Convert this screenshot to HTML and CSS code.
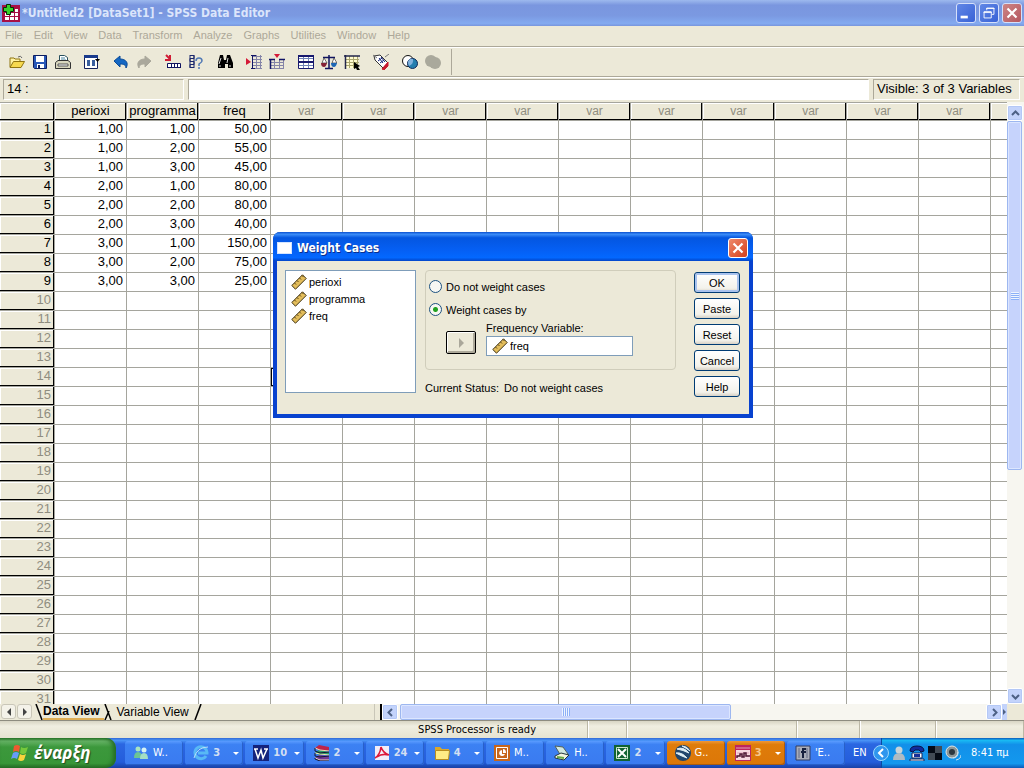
FILE: index.html
```html
<!DOCTYPE html>
<html lang="en">
<head>
<meta charset="utf-8">
<title>SPSS Data Editor</title>
<link rel="stylesheet" href="styles.css">
<script src="grid.js" defer></script>
</head>
<body>
<svg class="defs" aria-hidden="true">
  <symbol id="ruler" viewBox="0 0 16 16"><path d="M.8 11.500 11.500.8l3.700 3.700L4.500 15.200z" fill="#e3bd5b" stroke="#3d3012"/><path d="m3.500 9 1.500 1.500M6 6.500 7.500 8m1-4L10 5.500m1-4L12.500 3" stroke="#5a4414"/></symbol>
</svg>
<header class="titlebar">
  <svg class="app-icon" viewBox="0 0 18 18"><path fill="#a80f45" d="M0 1h18v17H0z"/><path fill="#fff" d="M3 5h13v11H3z"/><path stroke="#a80f45" d="M3 8.500h13M3 12.500h13M7.500 5v11M12.500 5v11"/><path fill="#35d12a" stroke="#052d05" d="M4.500.5h4v3h3v4h-3v3h-4v-3h-3v-4h3z"/></svg>
  <h1>*Untitled2 [DataSet1] - SPSS Data Editor</h1>
  <div class="window-buttons">
    <button aria-label="Minimize"><svg viewBox="0 0 20 20"><path fill="#fff" d="M4 13h8v3H4z"/></svg></button>
    <button aria-label="Restore"><svg viewBox="0 0 20 20" fill="none" stroke="#fff"><path d="M7.500 7V4.500h8v7H13M7 5h9"/><path d="M4.500 8.500h8v7h-8zM4 9.500h9"/></svg></button>
    <button class="close" aria-label="Close"><svg viewBox="0 0 20 20"><path stroke="#fff" stroke-width="2.400" d="m5 5 10 10M15 5 5 15"/></svg></button>
  </div>
</header>
<nav class="menubar">
  <button>File</button><button>Edit</button><button>View</button><button>Data</button><button>Transform</button><button>Analyze</button><button>Graphs</button><button>Utilities</button><button>Window</button><button>Help</button>
</nav>
<div class="toolbar">
  <div class="tools">
    <button aria-label="Open"><svg viewBox="0 0 16 16"><path d="M1 13V4h4l1 1h5v3" fill="#fff3a5" stroke="#8f7410"/><path d="M1 13.500 4.500 7.500h11L12 13.500z" fill="#f6d94f" stroke="#8f7410"/><path d="M9 3q3-2 4 1" fill="none" stroke="#666"/></svg></button>
    <button aria-label="Save"><svg viewBox="0 0 16 16"><path d="M1.500 1.500h13v13h-12l-1-1z" fill="#2858b8" stroke="#0b1c60"/><path fill="#fff" d="M4 2h8v6H4zM5 10h7v4H5z"/><path fill="#0b1c60" d="M6 11h2v3H6z"/></svg></button>
    <button aria-label="Print"><svg viewBox="0 0 16 16"><path d="M4.500 7V1.500h5l3 2V7" fill="#fff" stroke="#28505e"/><path d="M6 4h4M6 6h5" stroke="#4685a0"/><path d="M.5 8.500 3 6.500h10l2.500 2v6H.5z" fill="#d8d6be" stroke="#333"/><path d="M3 10h10v2H3z" fill="#fff" stroke="#555"/></svg></button>
  </div>
  <div class="tools">
    <button aria-label="Recall dialog"><svg viewBox="0 0 16 16"><path d="M.5 1.500h13v13H.5z" fill="#fff" stroke="#14215c"/><path d="M0 1h14v3H0z" fill="#193a8c"/><path d="M3 6h3v6H3zM8 6h3v6H8z" fill="#3a5f9e"/><path d="M11 5h5l-2.500 3z" fill="#000"/></svg></button>
  </div>
  <div class="tools">
    <button aria-label="Undo"><svg viewBox="0 0 16 16"><path d="m1 7 6-5v3c6 0 9 4 6 9 0-3-2-4-6-4v3z" fill="#1467c3" stroke="#084a98"/></svg></button>
    <button aria-label="Redo" disabled><svg viewBox="0 0 16 16"><path d="M15 7 9 2v3C3 5 0 9 3 14c0-3 2-4 6-4v3z" fill="#aaa89c" stroke="#aaa89c"/></svg></button>
  </div>
  <div class="tools">
    <button aria-label="Go to case"><svg viewBox="0 0 16 16"><path d="m1 1 4 4m0-4v5H0" stroke="#d01d35" stroke-width="2" fill="none"/><path d="M2.500 9.500h13v4h-13z" fill="#fff" stroke="#10145f"/><path d="M6.500 9v4M9.500 9v4M12.500 9v4M2 13.500h14" stroke="#10145f"/></svg></button>
    <button aria-label="Variables"><svg viewBox="0 0 16 16"><path d="M2 1.500h4v3H2v3h4v3H2v3h4M2 1v13M6 1v13" fill="none" stroke="#1c286d"/><path d="M8 7q0-3 3-3 3 0 3 3 0 1-3 3v2m0 1v2" fill="none" stroke="#527ab5" stroke-width="1.500"/></svg></button>
  </div>
  <div class="tools">
    <button aria-label="Find"><svg viewBox="0 0 16 16"><path d="M3 1h3l1 5h2l1-5h3l3 8v5h-5v-4H8v4H1V9z"/><path d="m4 4-2 6m9-6-1 5M3 11v2m10-2v2" stroke="#ddd"/></svg></button>
  </div>
  <div class="tools">
    <button aria-label="Insert case"><svg viewBox="0 0 16 16"><path d="m0 4 5 4-5 3z" fill="#d41937"/><path d="M6 2.500h10M7 5.500h9M6 8.500h10M7 11.500h9M6 14.500h10M10.500 1v14M14.500 1v14" stroke="#8585a8"/><path d="M6.500 1v14M5 1.500h5M5 14.500h4" stroke="#111565"/></svg></button>
    <button aria-label="Insert variable"><svg viewBox="0 0 16 16"><path d="M5 0h6L8 4z" fill="#d41937"/><path d="M1 8.500h14M1 11.500h14M1 14.500h14M5.500 5v10M10.500 5v10M14.500 5v10" stroke="#8585a8"/><path d="M0 5.500h6m4 0h6M1.500 5v10" stroke="#111565" stroke-width="1.500"/></svg></button>
  </div>
  <div class="tools">
    <button aria-label="Split file"><svg viewBox="0 0 16 16"><path d="M.5 1.500h15v13H.5z" fill="#fff" stroke="#17196e"/><path d="M1 4.500h14M1 11.500h14M5.500 1v13M10.500 1v13" stroke="#7084b8"/><path d="M0 8h16M0 2h16" stroke="#17196e" stroke-width="2"/></svg></button>
    <button aria-label="Weight cases"><svg viewBox="0 0 16 16"><path d="M8 1v13M2 3.500h12M4 14.500h8" stroke="#10145f" stroke-width="1.500"/><path d="M3 4 1 9h5zm10 0-2 5h5z" fill="#fff" stroke="#333" stroke-width=".7"/><path d="M0 9h6q-1 4-3 4-3 0-3-4" fill="#852236"/><path d="M10 9h6q-1 4-3 4-3 0-3-4" fill="#1d67b5"/></svg></button>
    <button aria-label="Select cases"><svg viewBox="0 0 16 16"><path d="M1 2h13v12H1z" fill="#fffbd0"/><path d="M1 5.500h14M1 8.500h14M1 11.500h10M5.500 2v12M9.500 2v12M13.500 2v8" stroke="#aaa670"/><path d="M0 2h16M1.500 1v14" stroke="#22264c" stroke-width="1.500"/><path d="m10 8 6 4-2 1 2 3h-3l-1-2-2 1z"/></svg></button>
  </div>
  <div class="tools">
    <button aria-label="Value labels"><svg viewBox="0 0 16 16"><path d="m1 2 6-1 8 8-5 5-8-8z" fill="#fff" stroke="#333"/><path d="m9 15 6-7v4l-4 4z" fill="#c8172d" stroke="#c8172d"/><path d="m5 7 4-3m-2 5 4-3M6 4l4 5M8 3l4 5" stroke="#15247a"/><path d="M4 4 0 1m12 2 4-3" stroke="#777"/></svg></button>
  </div>
  <div class="tools">
    <button aria-label="Use sets"><svg viewBox="0 0 16 16"><circle cx="6" cy="7" r="5.500" fill="#fff" stroke="#111"/><circle cx="10.500" cy="9.500" r="5" fill="#247eaf" stroke="#102b5b"/><path d="M6 8q1-4 5-3 1 5-4 7-1-2-1-4" fill="#81b2df"/></svg></button>
    <button aria-label="Show all variables" disabled><svg viewBox="0 0 16 16"><circle cx="6" cy="7" r="6" fill="#aaa99c"/><circle cx="10" cy="9" r="6" fill="#aaa99c"/></svg></button>
  </div>
</div>
<div class="cellbar">
  <output class="address">14 :</output>
  <input class="cell-editor" aria-label="Cell value">
  <div class="visible-count">Visible: 3 of 3 Variables</div>
</div>
<main class="sheet">
  <div class="grid-pane">
    <table class="grid">
      <thead><tr><th></th><th>perioxi</th><th>programma</th><th>freq</th></tr></thead>
      <tbody></tbody>
    </table>
  </div>
  <div class="vscroll">
    <button class="sb" aria-label="Scroll up"><svg viewBox="0 0 9 9"><path d="m1 6 3.500-3.500L8 6"/></svg></button>
    <div class="vthumb"><i class="grip"></i></div>
    <div class="vtrack"></div>
    <button class="sb" aria-label="Scroll down"><svg viewBox="0 0 9 9"><path d="m1 3 3.500 3.500L8 3"/></svg></button>
  </div>
</main>
<div class="tabs">
  <button class="tab-arrow" aria-label="Previous tab"><svg viewBox="0 0 8 8"><path d="M6 0v8L2 4z"/></svg></button>
  <button class="tab-arrow" aria-label="Next tab"><svg viewBox="0 0 8 8"><path d="M2 0v8l4-4z"/></svg></button>
  <svg class="slash" viewBox="0 0 8 16"><path d="m1 0 6 16"/></svg>
  <button class="tab active">Data View</button>
  <svg class="slash" viewBox="0 0 8 16"><path d="m1 0 6 16M5 7 1 16"/></svg>
  <button class="tab">Variable View</button>
  <svg class="slash" viewBox="0 0 8 16"><path d="M7 0 1 16"/></svg>
  <div class="splitter"></div>
  <div class="hscroll">
    <button class="sb" aria-label="Scroll left"><svg viewBox="0 0 9 9"><path d="M6 1 2.500 4.500 6 8"/></svg></button>
    <div class="hthumb"><i class="grip"></i></div>
    <div class="htrack"></div>
    <button class="sb" aria-label="Scroll right"><svg viewBox="0 0 9 9"><path d="m3 1 3.500 3.500L3 8"/></svg></button>
    <svg class="mini" viewBox="0 0 5 16"><path d="m1 5 3 3-3 3z"/></svg>
  </div>
</div>
<footer class="status"><span>SPSS Processor is ready</span><span></span><span></span><span></span><span></span><span></span></footer>
<nav class="taskbar">
  <button class="start"><svg viewBox="0 0 18 18"><path d="M3 2q3-2 6 0L8 8Q5 6 2 8z" fill="#ef5a30"/><path d="M10 3q3 2 7 0l-2 6q-3 2-6 0z" fill="#76c83c"/><path d="M2 9q3-2 6 0l-2 6q-3-2-6 0z" fill="#679cf8"/><path d="M9 10q3 2 6 0l-2 6q-3 2-6 0z" fill="#fad33c"/></svg><span>έναρξη</span></button>
  <div class="tasks">
    <button class="task"><svg viewBox="0 0 16 16"><circle cx="5" cy="4" r="2.500" fill="#a8e5c0"/><path d="M1 13q0-6 4-6t4 6z" fill="#6cc595"/><circle cx="11" cy="5" r="2.500" fill="#d6f2f5"/><path d="M7 14q0-6 4-6t4 6z" fill="#a4dfc5"/></svg>W..</button>
    <button class="task multi"><svg viewBox="0 0 16 16"><path d="M13 11a6 6 0 1 1 1-3H5" fill="none" stroke="#58b9f5" stroke-width="3"/><path d="M1 13Q4 2 15 2" fill="none" stroke="#b7def8"/></svg>3</button>
    <button class="task multi"><svg viewBox="0 0 16 16"><path d="M0 0h16v16H0z" fill="#14237c"/><path d="m2 4 3 9 3-8 2 8 4-9M1 4h4m6 0h4" fill="none" stroke="#fff" stroke-width="1.500"/></svg>10</button>
    <button class="task multi"><svg viewBox="0 0 16 16"><path d="m1 3 4-3 10 2v4L5 5z" fill="#bf244a"/><path d="m1 8 4-3 10 2v3L5 10z" fill="#2a9b68"/><path d="m1 13 4-3 10 1v4l-9 1z" fill="#703898"/><path d="m1 3 5 2 9 1m-14 2 5 1 9 1m-14 3 5 2 9 0" fill="none" stroke="#f2dfb5"/><path d="M1 3v3l5 2 9-1M1 8v3l5 1 9-1M1 13v1l5 2h9" fill="none" stroke="#17162f"/></svg>2</button>
    <button class="task multi"><svg viewBox="0 0 16 16"><path d="M1 1h14v14H1z" fill="#f2edf7"/><path d="M1 13q5-3 6-11 2 6 8 8-7-2-12 2" fill="none" stroke="#dc1839" stroke-width="1.600"/></svg>24</button>
    <button class="task multi"><svg viewBox="0 0 16 16"><path d="M1 14V2h5l2 2h7v10z" fill="#d9a72c"/><path d="M1.500 5.500h14l-1 9h-13z" fill="#ffeb85" stroke="#b98d20"/></svg>4</button>
    <button class="task"><svg viewBox="0 0 16 16"><path d="M0 0h16v16H0z" fill="#c7661b"/><path d="M2.500 2.500h11v11h-11z" fill="none" stroke="#fff"/><path d="M8 5a3 3 0 1 0 3 4H8z" fill="#fff"/><path d="M9 4v4h3q0-4-3-4" fill="#fff"/></svg>M..</button>
    <button class="task"><svg viewBox="0 0 16 16"><path d="m1 1 8 1 5 7-7 2z" fill="#d2e8e1" stroke="#52625c"/><path d="m1 11 6-3 8 2-5 5-9-2z" fill="#f5f5df" stroke="#26373f"/><path d="m3 12 7 1" stroke="#66a947" stroke-width="2"/></svg>H..</button>
    <button class="task multi"><svg viewBox="0 0 16 16"><path d="M0 0h16v16H0z" fill="#116332"/><path d="M2.500 2.500h11v11h-11z" fill="none" stroke="#cfe9cd"/><path d="m4 4 8 8m0-8-8 8" stroke="#fff" stroke-width="2"/></svg>2</button>
    <button class="task alert"><svg viewBox="0 0 16 16"><circle cx="8" cy="8" r="8" fill="#21466d"/><path d="M2 4q6-3 12 4-6-3-12-4M1 8q6-1 11 5-6-2-11-5M7 1q5 0 8 5-4-3-8-5" fill="#e7f4fa" stroke="#dcebf1"/></svg>G..</button>
    <button class="task multi alert"><svg viewBox="0 0 16 16"><path d="M0 0h16v16H0z" fill="#bf245e"/><path d="M1 5h14v10H1z" fill="#f6d8df"/><path d="M1 3h14M2 8h12M2 11h12" stroke="#e2a3b8"/><path d="M2 13v-2h3V9h2v3h2V8h2v3h4" fill="none" stroke="#4d1934" stroke-width="1.500"/></svg>3</button>
    <button class="task"><svg viewBox="0 0 16 16"><path d="M1 1h14v14H1z" fill="#a9adb9" stroke="#333c5e"/><path d="M4 3v10M12 3v10" stroke="#626b85"/><path d="M8 13V4h3M6 7h5" fill="none" stroke="#17213f" stroke-width="2"/></svg>'E..</button>
  </div>
  <span class="lang">EN</span>
  <div class="tray">
    <button class="tray-toggle" aria-label="Show hidden icons"><svg viewBox="0 0 16 16"><circle cx="8" cy="8" r="7.500" fill="#2f96ee" stroke="#9dd8fc"/><path d="M10 4 6 8l4 4" fill="none" stroke="#fff" stroke-width="2"/></svg></button>
    <svg viewBox="0 0 16 16"><circle cx="8" cy="5" r="3.500" fill="#c7d3d8"/><path d="M2 15q0-7 6-7t6 7z" fill="#aebbc3"/></svg>
    <svg viewBox="0 0 16 16"><path d="M1 6q0-5 7-5t7 5l-3 1-2-2H6L4 7z" fill="#112b9c" stroke="#071448"/><path d="M3 8h10v5H3zM1 14h14v2H1z" fill="#fff" stroke="#15255b"/><path d="M5 9h6v3H5z" fill="#182e98"/></svg>
    <svg viewBox="0 0 16 16"><path d="M1 1h14v14H1z" fill="#050b15"/><path d="M8 1h7v7H8zM1 8h7v7H1z" fill="#424b55"/></svg>
    <svg viewBox="0 0 16 16"><circle cx="7" cy="7" r="6" fill="#8d9798" stroke="#e0e6e5"/><circle cx="7" cy="7" r="3" fill="#2d373e"/><path d="M8 13q5 0 5-6m-2 8q5-1 5-5" fill="none" stroke="#d0e3ef"/></svg>
    <time>8:41 πμ</time>
  </div>
</nav>
<section class="dialog" role="dialog" aria-labelledby="dialog-title">
  <header class="dialog-title"><i class="dialog-icon"></i><h2 id="dialog-title">Weight Cases</h2><button class="dialog-close" aria-label="Close"><svg viewBox="0 0 20 20"><path stroke="#fff" stroke-width="2.400" d="m5 5 10 10M15 5 5 15"/></svg></button></header>
  <form class="dialog-body" onsubmit="return false">
    <ul class="variables">
      <li><svg><use href="#ruler"/></svg>perioxi</li>
      <li><svg><use href="#ruler"/></svg>programma</li>
      <li><svg><use href="#ruler"/></svg>freq</li>
    </ul>
    <div class="options">
      <div class="group">
        <label class="radio"><input type="radio" name="weight">Do not weight cases</label>
        <label class="radio"><input type="radio" name="weight" checked>Weight cases by</label>
        <div class="frequency">
          <button class="move" type="button" aria-label="Move variable" disabled><svg viewBox="0 0 8 10"><path d="M2 0v10l5-5z" fill="#aaa79a"/></svg></button>
          <div class="freq-field">
            <label for="freq">Frequency Variable:</label>
            <div class="field"><svg><use href="#ruler"/></svg><input id="freq" value="freq" readonly></div>
          </div>
        </div>
      </div>
      <p class="current"><span>Current Status:</span><span>Do not weight cases</span></p>
    </div>
    <div class="actions">
      <button class="default">OK</button><button>Paste</button><button>Reset</button><button>Cancel</button><button>Help</button>
    </div>
  </form>
</section>
</body>
</html>
```
FILE: styles.css
```css
* { box-sizing: border-box; }
html, body { height: 100%; }
body {
  margin: 0;
  display: flex;
  flex-direction: column;
  position: relative;
  overflow: hidden;
  background: #ece9d8;
  color: #000;
  font: 11px/14px "DejaVu Sans Condensed", "Liberation Sans", sans-serif;
}
button { font: inherit; color: inherit; padding: 0; border: 0; background: none; }
input { font: inherit; margin: 0; }
h1, h2, p, ul { margin: 0; padding: 0; }
svg { display: block; flex: none; }
.defs { display: none; }

.titlebar {
  flex: none;
  height: 26px;
  display: flex;
  align-items: center;
  padding: 0 2px;
  background: linear-gradient(#9db9ee, #7a96df 20%, #7b99e1 60%, #83aaf0 90%, #7895dc);
}
.app-icon { width: 18px; height: 18px; }
.titlebar h1 { flex: 1; margin-left: 2px; color: #dbe5fb; font: bold 12px/18px "DejaVu Sans Condensed", sans-serif; }
.window-buttons { display: flex; gap: 3px; }
.window-buttons button, .dialog-close {
  width: 20px;
  height: 20px;
  border: 1px solid #d5e0fa;
  border-radius: 3px;
  background: linear-gradient(135deg, #6187e6, #3862d6);
}
.window-buttons svg, .dialog-close svg { width: 18px; height: 18px; }
.window-buttons .close { background: linear-gradient(135deg, #cd8585, #b55760); }

.menubar { flex: none; height: 21px; display: flex; gap: 11px; padding: 0 5px 2px; border-bottom: 1px solid #aca899; color: #aca899; font-family: "Liberation Sans", sans-serif; }

.toolbar { flex: none; height: 30px; display: flex; gap: 6px; padding: 1px 5px; border-top: 1px solid #fff; border-bottom: 1px solid #aca899; }
.tools { display: flex; align-items: center; }
.tools:last-child { padding-right: 7px; border-right: 1px solid #aca899; }
.tools button { width: 23px; height: 22px; display: grid; place-items: center; }
.tools svg { width: 16px; height: 16px; }

.cellbar { flex: none; height: 25px; display: flex; gap: 4px; padding: 1px 4px 2px 3px; border-top: 1px solid #fff; font: 13px/18px "Liberation Sans", sans-serif; }
.address, .visible-count { border: 1px solid; border-color: #aca899 #fff #fff #aca899; padding: 0 3px; }
.address { width: 181px; }
.visible-count { width: 147px; white-space: nowrap; }
.cell-editor { flex: 1; min-width: 0; border: 1px solid; border-color: #aca899 #fff #fff #aca899; background: #fff; }

.sheet { flex: 1; min-height: 0; display: flex; }
.grid-pane { flex: 1; min-width: 0; overflow: hidden; background: #fff; }
.grid { table-layout: fixed; width: 1063px; border-collapse: separate; border-spacing: 0; font: 13px/16px "Liberation Sans", sans-serif; }
.grid th, .grid td { height: 19px; padding: 0 3px; border: solid #a5a59d; border-width: 0 1px 1px 0; overflow: hidden; white-space: nowrap; vertical-align: top; }
.grid td { text-align: right; }
.grid th { font-weight: normal; background: #ece9d8; box-shadow: inset -1px -1px #000, inset 1px 1px #fff; }
.grid thead th { width: 72px; border-top: 1px solid #a5a59d; padding: 0; text-align: center; }
.grid thead th:first-child { width: 55px; }
.grid tbody th { text-align: right; }
.grid .unused { color: #8f8d80; }
.grid thead .unused { font-size: 12px; }
.grid .selected { box-shadow: inset 1px 1px #000, inset -1px -1px #000; }

.vscroll { width: 17px; display: flex; flex-direction: column; padding-top: 3px; background: #f7f6f0; }
.sb { flex: none; width: 16px; height: 16px; display: grid; place-items: center; border: 1px solid #fff; border-radius: 2px; background: #c3d3fb; box-shadow: inset 0 0 0 1px #b4c8f6; }
.sb svg { width: 9px; height: 9px; fill: none; stroke: #4d6185; stroke-width: 2; }
.vthumb, .hthumb { display: grid; place-items: center; border: 1px solid #9db7f0; border-radius: 2px; background: #c6d3fc; box-shadow: inset 0 0 0 1px #dce6ff; }
.vthumb { width: 15px; flex: 349; }
.vtrack { flex: 219; }
.grip { width: 8px; height: 8px; background: repeating-linear-gradient(#eef4fe 0 1px, #8cb0f8 1px 2px); }
.hthumb .grip { background: repeating-linear-gradient(90deg, #eef4fe 0 1px, #8cb0f8 1px 2px); }

.tabs { flex: none; height: 17px; display: flex; border-bottom: 1px solid #8e8c80; }
.tab-arrow { width: 15px; height: 15px; margin-left: 1px; display: grid; place-items: center; border: 1px solid #c9c6b8; border-radius: 3px; background: #f4f2e9; }
.tab-arrow svg { width: 8px; height: 8px; fill: #444; }
.slash { width: 8px; height: 16px; fill: none; stroke: #000; stroke-width: 1.500; }
.tab-arrow + .slash { margin-left: 3px; }
.tab { font: 12px/15px "Liberation Sans", sans-serif; height: 16px; padding: 0 5px 0 4px; }
.tab.active { font-weight: bold; padding: 0 5px 0 0; border-bottom: 2px solid #dfae55; }
.splitter { margin-left: auto; width: 8px; border-left: 1px solid #c9c6b8; border-right: 2px solid #000; }
.hscroll { width: 61%; display: flex; margin-right: 17px; background: #f7f6f0; }
.hthumb { flex: 329; height: 16px; margin-left: 2px; }
.htrack { flex: 255; }
.mini { width: 5px; height: 16px; background: #c3d3fb; fill: #4d6185; }

.status { flex: none; height: 17px; display: grid; grid-template-columns: 588fr 39fr 170fr 63fr 76fr 88fr; background: linear-gradient(#d8d5c4, #f0eee1 30%, #e6e3d1); line-height: 18px; }
.status span { border-right: 1px solid #bbb7a5; box-shadow: 1px 0 #fff; padding-right: 0; }
.status span:first-child { padding-right: 51px; text-align: right; }

.taskbar { flex: none; height: 30px; display: flex; align-items: center; color: #fff; background: linear-gradient(#3168d5, #4993f6 8%, #2b67e2 20%, #245ddb 80%, #1941a5); }
.start { width: 116px; height: 30px; display: flex; align-items: center; gap: 5px; padding-left: 11px; border-radius: 0 10px 10px 0; background: linear-gradient(#2c7a2c, #66b366 10%, #3c983c 30%, #389638 85%, #256d25); box-shadow: inset -3px 0 4px #256c25; font: italic bold 17px/24px "Open Sans", "Noto Sans", sans-serif; text-shadow: 1px 1px 1px #214c21; }
.start svg { width: 18px; height: 18px; }
.tasks { flex: 1; min-width: 0; display: flex; gap: 2px; margin-left: 9px; }
.task { flex: 1; min-width: 0; height: 24px; display: flex; align-items: center; gap: 4px; padding-left: 8px; border-radius: 3px; background: linear-gradient(#5a9cff, #3c81f3 15%, #3a7af0); box-shadow: inset -1px -1px #2860c8; white-space: nowrap; }
.task svg, .tray svg { width: 16px; height: 16px; }
.task.multi { color: #d3dff2; font-weight: bold; }
.task.multi::after { content: ""; margin-left: auto; margin-right: 4px; border: solid transparent; border-width: 3px 3px 0; border-top-color: #fff; }
.task.alert { background: linear-gradient(#ee9837, #df7c0a 15%, #dc7708); box-shadow: inset -1px -1px #a95c10; }
.task.multi.alert { color: #f6c88c; }
.lang { width: 36px; padding-left: 8px; }
.tray { width: 143px; height: 30px; display: flex; align-items: center; gap: 2px; background: linear-gradient(#0c59b9, #19b9f3 8%, #1290e9 22%, #1398ee 85%, #0c5ab8); border-left: 1px solid #0a4aa0; }
.tray-toggle { margin-left: -9px; }
.tray time { margin-left: 8px; white-space: nowrap; }

.dialog { position: absolute; left: 273px; top: 232px; width: 480px; border: solid #0842cf; border-width: 0 4px 4px; border-radius: 7px 7px 0 0; background: #ece9d8; font: 11px/14px "Liberation Sans", sans-serif; }
.dialog-title { height: 29px; margin: 0 -4px; display: flex; align-items: center; padding: 2px 5px 0 4px; border-radius: 7px 7px 0 0; background: linear-gradient(#0a50d0, #3b8cf8 8%, #0456e0 20%, #0560f5 65%, #0368ff 88%, #0345c8); }
.dialog-icon { width: 15px; height: 12px; background: #fff; border: 1px solid #d5e5ff; }
.dialog-title h2 { flex: 1; margin-left: 5px; color: #fff; font: bold 12px/16px "DejaVu Sans Condensed", sans-serif; text-shadow: 1px 1px #0b2f8c; }
.dialog-close { background: linear-gradient(135deg, #ee8a6c, #d43f1c); border-color: #fff; }
.dialog-body { display: flex; padding: 9px 9px 17px 8px; }
.variables { width: 131px; height: 123px; margin-right: 9px; padding: 2px 5px; list-style: none; border: 1px solid #7f9db9; background: #fff; }
.variables li { height: 17px; display: flex; align-items: center; gap: 2px; }
.variables svg, .field svg { width: 16px; height: 16px; }
.options { flex: 1; margin-right: 18px; }
.group { height: 100px; padding: 4px 3px; border: 1px solid #d0cdbb; border-radius: 4px; }
.radio { display: flex; align-items: center; gap: 4px; height: 23px; }
.radio input { appearance: none; width: 13px; height: 13px; border: 1px solid #1c5180; border-radius: 50%; background: #f7f7f3; }
.radio input:checked { background: radial-gradient(#21a121 0 2px, #f7f7f3 3px); }
.frequency { display: flex; align-items: flex-end; gap: 10px; padding-left: 17px; }
.move { width: 30px; height: 23px; display: grid; place-items: center; border: 1px solid #000; border-radius: 2px; background: #ece9d8; box-shadow: inset 1px 1px #fff, inset -2px -2px #aca899; margin-bottom: 2px; }
.move svg { width: 8px; height: 10px; }
.freq-field { width: 147px; }
.freq-field label { display: block; }
.field { height: 20px; margin-top: 1px; display: flex; align-items: center; gap: 2px; padding-left: 5px; border: 1px solid #7f9db9; background: #fff; }
.field input { min-width: 0; flex: 1; border: 0; padding: 0; outline: 0; background: none; }
.current { display: flex; gap: 5px; margin-top: 11px; }
.actions { width: 46px; display: flex; flex-direction: column; gap: 5px; padding-top: 2px; }
.actions button { height: 21px; border: 1px solid #003c74; border-radius: 3px; background: linear-gradient(#fff, #f3f2eb 80%, #d8d2c6); }
.actions .default { box-shadow: inset 0 0 0 2px #a9c3ee; }
```
FILE: grid.js
```js
const COLUMNS = 14;
const ROWS = 31;
const data = [
  ["1,00", "1,00", "50,00"],
  ["1,00", "2,00", "55,00"],
  ["1,00", "3,00", "45,00"],
  ["2,00", "1,00", "80,00"],
  ["2,00", "2,00", "80,00"],
  ["2,00", "3,00", "40,00"],
  ["3,00", "1,00", "150,00"],
  ["3,00", "2,00", "75,00"],
  ["3,00", "3,00", "25,00"]
];

const head = document.querySelector(".grid thead tr");
for (let c = 3; c < COLUMNS; c++) {
  const th = document.createElement("th");
  th.className = "unused";
  th.textContent = c < COLUMNS - 1 ? "var" : "";
  head.append(th);
}

const body = document.querySelector(".grid tbody");
for (let r = 0; r < ROWS; r++) {
  const row = body.insertRow();
  const th = document.createElement("th");
  th.textContent = r + 1;
  if (!data[r]) th.className = "unused";
  row.append(th);
  for (let c = 0; c < COLUMNS; c++) {
    const cell = row.insertCell();
    cell.textContent = data[r]?.[c] ?? "";
    if (r === 13 && c === 3) cell.className = "selected";
  }
}
```
